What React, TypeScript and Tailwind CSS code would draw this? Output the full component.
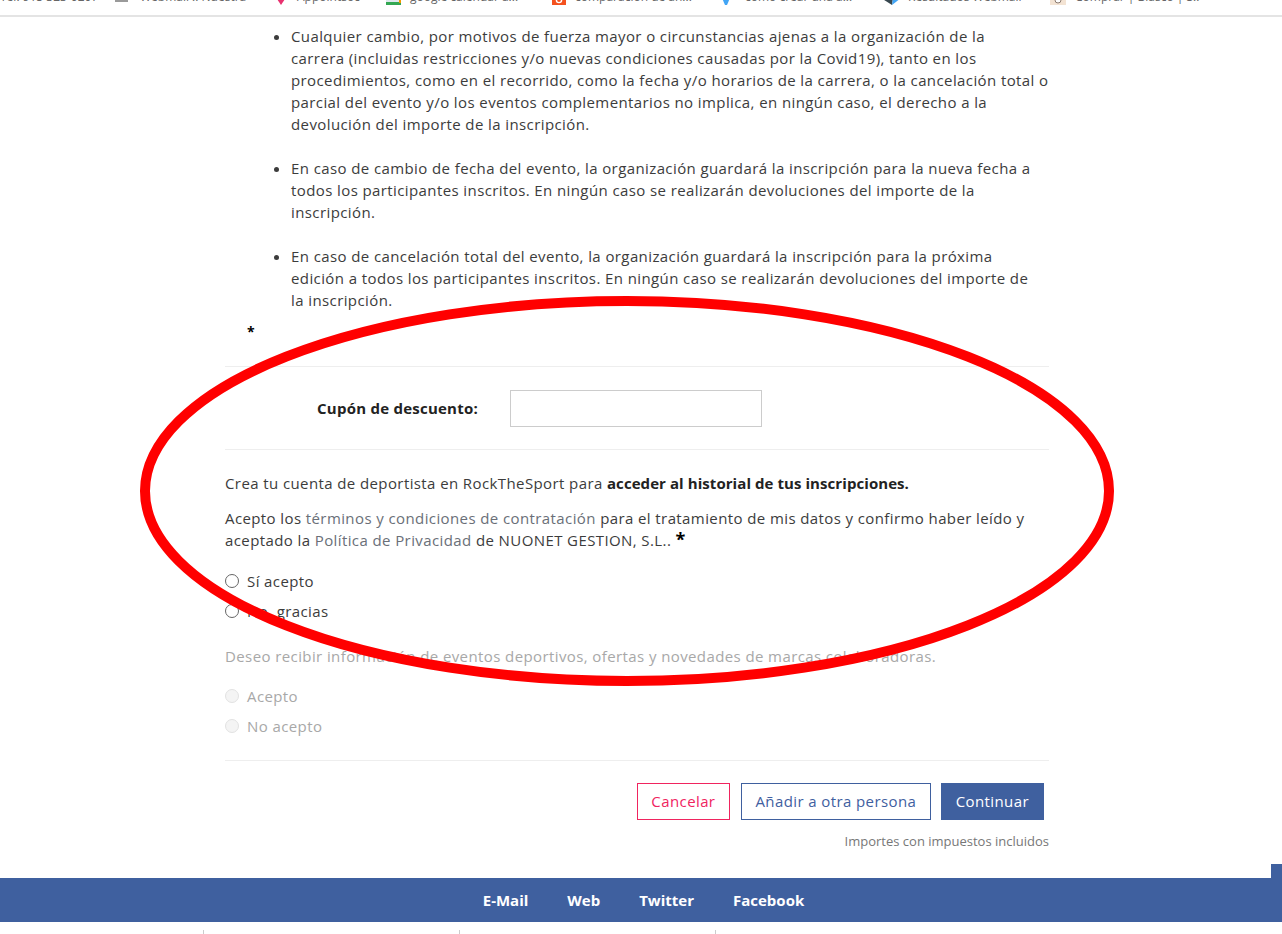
const bookmarks = [
  { label: "Tel. 915 323-0207", w: "w-[115px]", icon: "" },
  { label: "Webmail :: Nuestra", w: "w-[157px]", icon: "gray" },
  { label: "Appointsoc", w: "w-[113px]", icon: "pink" },
  { label: "google calendar a...", w: "w-[165px]", icon: "green" },
  { label: "comparacion de an...", w: "w-[170px]", icon: "orange" },
  { label: "como crear una a...", w: "w-[163px]", icon: "blue" },
  { label: "Resultados Webmail", w: "w-[167px]", icon: "dark" },
  { label: "Comprar | Blasco | S...", w: "w-[150px]", icon: "beige" },
];

// line breaks follow the reference
const items = [
  [
    "Cualquier cambio, por motivos de fuerza mayor o circunstancias ajenas a la organización de la",
    "carrera (incluidas restricciones y/o nuevas condiciones causadas por la Covid19), tanto en los",
    "procedimientos, como en el recorrido, como la fecha y/o horarios de la carrera, o la cancelación total o",
    "parcial del evento y/o los eventos complementarios no implica, en ningún caso, el derecho a la",
    "devolución del importe de la inscripción.",
  ],
  [
    "En caso de cambio de fecha del evento, la organización guardará la inscripción para la nueva fecha a",
    "todos los participantes inscritos. En ningún caso se realizarán devoluciones del importe de la",
    "inscripción.",
  ],
  [
    "En caso de cancelación total del evento, la organización guardará la inscripción para la próxima",
    "edición a todos los participantes inscritos. En ningún caso se realizarán devoluciones del importe de",
    "la inscripción.",
  ],
];

// only the bottom 5px of these favicons show under the page edge (viewBox y 12-17)
function Favicon({ name }: { name: string }) {
  return (
    <svg className="shrink-0" width="16" height="17" viewBox="0 0 16 17">
      {name === "gray" && <rect x="0" y="10" width="13" height="4" fill="#9a9a9a" />}
      {name === "pink" && <path d="M3 8h12l-6 9z" fill="#e8316f" />}
      {name === "green" && (
        <>
          <rect x="1" y="8" width="15" height="7" fill="#dfe8ee" />
          <rect x="1" y="14" width="15" height="3" fill="#34a853" />
          <rect x="14" y="10" width="2" height="5" fill="#f29900" />
        </>
      )}
      {name === "orange" && (
        <>
          <rect x="2" y="6" width="15" height="11" fill="#f4511e" />
          <circle cx="9" cy="12" r="2.6" fill="none" stroke="#fff" strokeWidth="1.4" />
        </>
      )}
      {name === "blue" && <path d="M2 10h8l-3 7H5z" fill="#42a5f5" />}
      {name === "dark" && (
        <>
          <path d="M-2 10h12l-1 7z" fill="#37474f" />
          <path d="M10 10h8l-9 7z" fill="#42a5f5" />
        </>
      )}
      {name === "beige" && (
        <>
          <rect x="0" y="8" width="16" height="9" fill="#f3e3d3" />
          <circle cx="8" cy="12" r="3" fill="#fff" stroke="#8a7a70" />
        </>
      )}
    </svg>
  );
}

function Radio({ label, disabled }: { label: string; disabled?: boolean }) {
  return (
    <label className={`flex items-center h-[30px] gap-2 ${disabled ? "text-[#a8a8a8]" : "text-[#3c3c3c]"}`}>
      <span className={`w-[14px] h-[14px] rounded-full border ${disabled ? "border-[#e2e2e2] bg-[#f4f4f4]" : "border-[#666] bg-white"}`} />
      {label}
    </label>
  );
}

export default function App() {
  return (
    <div className="relative w-[1282px] h-[934px] overflow-hidden bg-white font-['Open_Sans',sans-serif] text-[15px] tracking-[0.4px] leading-[22px] text-[#3c3c3c]">
      <div className="h-[17px] border-b-2 border-[#e4e4e4] overflow-hidden">
        <div className="flex -mt-[12px] text-[12px] tracking-normal leading-[18px] text-[#666]">
          {bookmarks.map((b) => (
            <div key={b.label} className={`${b.w} shrink-0 flex items-start gap-[9px] whitespace-nowrap overflow-hidden`}>
              {b.icon && <Favicon name={b.icon} />}
              <span>{b.label}</span>
            </div>
          ))}
        </div>
      </div>

      <main className="w-[824px] ml-[225px]">
        <ul className="list-disc pl-[66px] pt-[8px] flex flex-col gap-[22px]">
          {items.map((lines) => (
            <li key={lines[0]} className="whitespace-nowrap">
              {lines.map((l) => (
                <span key={l} className="block">{l}</span>
              ))}
            </li>
          ))}
        </ul>
        <div className="pl-[22px] mt-[10px] h-[22px] text-[14px] text-black font-bold">*</div>
        <div className="border-t border-[#eee] mt-[23px] h-[83px] flex items-center">
          <span className="w-[253px] text-right font-bold text-[#222] tracking-[0.24px]">Cupón de descuento:</span>
          <span className="ml-[32px] w-[252px] h-[37px] border border-[#ccc] bg-white" />
        </div>
        <div className="border-t border-[#eee] pt-[22px]">
          <p>
            Crea tu cuenta de deportista en RockTheSport para <b className="text-[#222] tracking-[0.07px]">acceder al historial de tus inscripciones.</b>
          </p>
          <p className="mt-[13px]">
            Acepto los <span className="text-[#6a6f78]">términos y condiciones de contratación</span> para el tratamiento de mis datos y confirmo haber leído y aceptado la <span className="text-[#6a6f78]">Política de Privacidad</span> de NUONET GESTION, S.L.. <b className="text-black text-[18px] leading-none">*</b>
          </p>
          <div className="mt-[15px]">
            <Radio label="Sí acepto" />
            <Radio label="No, gracias" />
          </div>
          <p className="mt-[19px] text-[#a8a8a8]">Deseo recibir información de eventos deportivos, ofertas y novedades de marcas colaboradoras.</p>
          <div className="mt-[14px]">
            <Radio label="Acepto" disabled />
            <Radio label="No acepto" disabled />
          </div>
        </div>
        <div className="border-t border-[#eee] mt-[19px] pt-[22px] flex justify-end gap-[10px] pr-[5px]">
          <button className="h-[37px] px-[13.5px] pb-px mr-px border border-[#f0245f] text-[#f0245f]">Cancelar</button>
          <button className="h-[37px] px-[13.5px] pb-px border border-[#3f609f] text-[#3f609f]">Añadir a otra persona</button>
          <button className="h-[37px] px-[15px] pb-px bg-[#3f609f] text-white">Continuar</button>
        </div>
        <p className="text-right text-[13px] tracking-normal text-[#777] mt-[10px]">Importes con impuestos incluidos</p>
      </main>

      <div className="absolute right-0 top-[864px] w-[11px] h-[14px] bg-[#3f609f]" />
      <footer className="absolute left-0 top-[878px] w-full h-[44px] bg-[#3f609f] flex items-center justify-center gap-[39px] pl-[5px] font-bold tracking-normal text-white">
        <span>E-Mail</span>
        <span>Web</span>
        <span>Twitter</span>
        <span>Facebook</span>
      </footer>
      <div className="absolute left-[203px] top-[930px] w-px h-[4px] bg-[#ccc]" />
      <div className="absolute left-[459px] top-[930px] w-px h-[4px] bg-[#ccc]" />
      <div className="absolute left-[715px] top-[930px] w-px h-[4px] bg-[#ccc]" />

      <svg className="absolute left-0 top-0 pointer-events-none" width="1282" height="934" fill="none">
        <ellipse cx="627" cy="491" rx="482" ry="190" stroke="#ff0000" strokeWidth="10" />
      </svg>
    </div>
  );
}
